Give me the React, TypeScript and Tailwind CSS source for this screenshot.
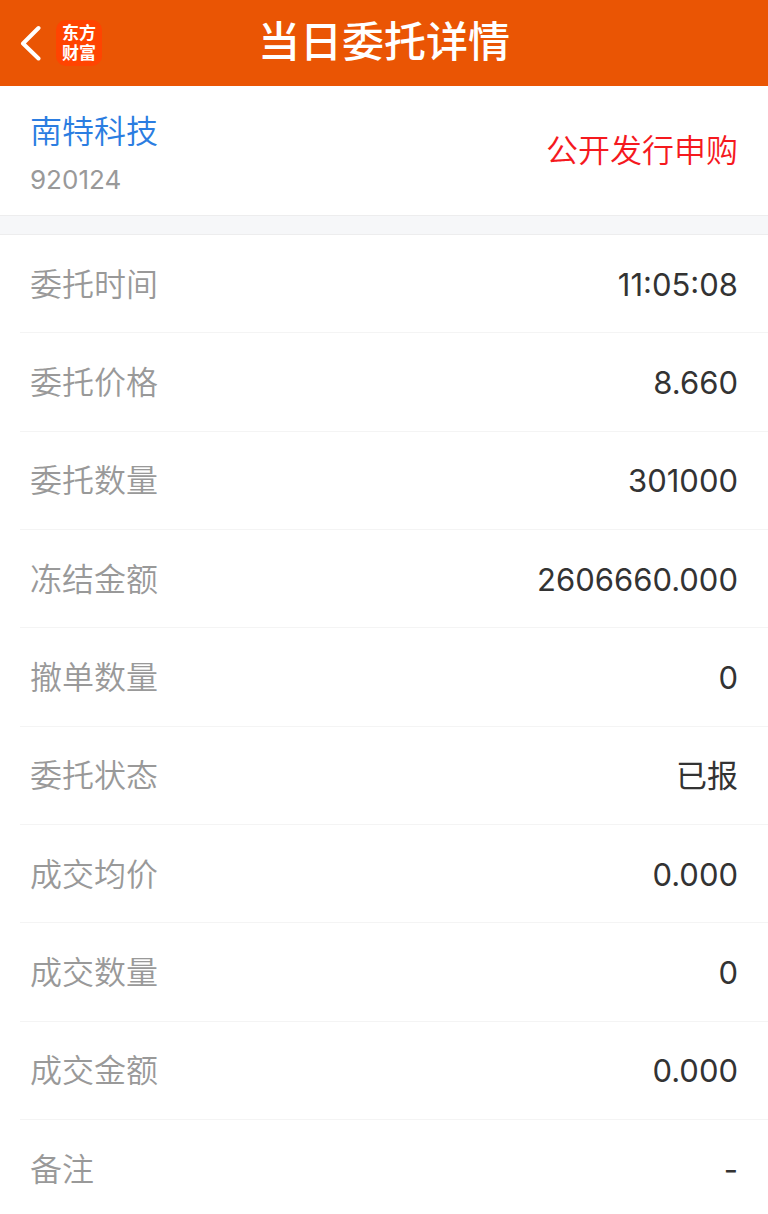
import { memo } from 'react';

const stock = {
  name: '南特科技',
  code: '920124',
  type: '公开发行申购',
};

const rows = [
  { label: '委托时间', value: '11:05:08' },
  { label: '委托价格', value: '8.660' },
  { label: '委托数量', value: '301000' },
  { label: '冻结金额', value: '2606660.000' },
  { label: '撤单数量', value: '0' },
  { label: '委托状态', value: '已报' },
  { label: '成交均价', value: '0.000' },
  { label: '成交数量', value: '0' },
  { label: '成交金额', value: '0.000' },
  { label: '备注', value: '-' },
];

const Header = memo(() => (
  <header className="grid h-[86px] grid-cols-[1fr_auto_1fr] items-center bg-[#ea5504] px-5 text-white">
    <div className="flex items-center gap-[15px]">
      <button type="button" aria-label="返回" className="block">
        <svg className="h-9 w-[21px]" viewBox="0 0 21 36" fill="none" stroke="currentColor" strokeWidth="4" strokeLinecap="round" strokeLinejoin="round" aria-hidden>
          <path d="M18.5 3 3 18.5l15.5 15" />
        </svg>
      </button>
      <div className="flex size-[46px] flex-col items-center justify-center rounded-[10px] bg-[#ff4401] text-[17px] leading-[20px] font-bold">
        <span>东方</span>
        <span>财富</span>
      </div>
    </div>
    <h1 className="pb-[3px] text-[42px] leading-[50px] font-medium">当日委托详情</h1>
  </header>
));
Header.displayName = 'Header';

const Summary = memo(() => (
  <section className="flex h-[129px] items-center justify-between px-[30px]">
    <div className="pt-1">
      <h2 className="text-[32px] leading-[48px] font-[350] text-[#2b7de1]">{stock.name}</h2>
      <p className="mt-[6px] text-[26px] leading-9 text-[#999999]">{stock.code}</p>
    </div>
    <p className="text-[32px] leading-[48px] font-[350] text-[#f5191e]">{stock.type}</p>
  </section>
));
Summary.displayName = 'Summary';

// rows share the height left under the summary
const Details = memo(() => (
  <dl className="flex flex-1 flex-col pl-5 leading-[48px]">
    {rows.map(({ label, value }) => (
      <div key={label} className="flex min-h-24 flex-1 items-center justify-between border-b border-[#f4f4f4] pt-[2px] pr-[30px] pl-[10px] last:min-h-[94px] last:flex-none last:border-b-0 last:pt-[6px]">
        <dt className="text-[32px] font-[350] text-[#999999]">{label}</dt>
        <dd className="text-[31px] text-[#333333]">{value}</dd>
      </div>
    ))}
  </dl>
));
Details.displayName = 'Details';

export default function App() {
  return (
    <main className="flex min-h-screen flex-col bg-white font-['Inter','Noto_Sans_CJK_SC',sans-serif]" lang="zh-CN">
      <Header />
      <Summary />
      <div className="h-5 border-y border-[#ededee] bg-[#f6f7f9]" />
      <Details />
    </main>
  );
}
